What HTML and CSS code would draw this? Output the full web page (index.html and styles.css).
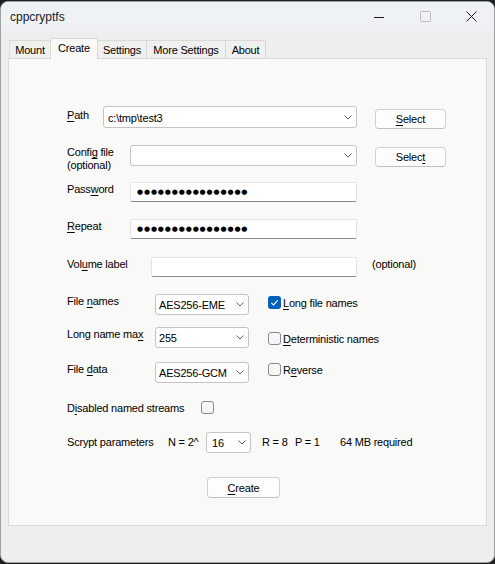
FILE: index.html
```html
<!DOCTYPE html>
<html>
<head>
<meta charset="utf-8">
<title>cppcryptfs</title>
<link rel="stylesheet" href="styles.css">
</head>
<body>
<div class="window">
  <div class="titlebar">
    <div class="title">cppcryptfs</div>
    <div class="caption">
      <div class="cbtn"><svg width="10" height="10" viewBox="0 0 10 10"><path d="M0 5.5H10" stroke="#1b1b1b" stroke-width="1"/></svg></div>
      <div class="cbtn"><svg width="11" height="11" viewBox="0 0 11 11"><rect x="0.5" y="0.5" width="10" height="10" rx="1" fill="none" stroke="#bdbdbd"/></svg></div>
      <div class="cbtn"><svg width="11" height="11" viewBox="0 0 11 11"><path d="M0.5 0.5L10.5 10.5M10.5 0.5L0.5 10.5" stroke="#1b1b1b" stroke-width="1"/></svg></div>
    </div>
  </div>
  <div class="client">
    <div class="tabs">
      <div class="tab t-mount">Mount</div>
      <div class="tab sel t-create">Create</div>
      <div class="tab t-settings">Settings</div>
      <div class="tab t-more">More Settings</div>
      <div class="tab t-about">About</div>
    </div>
    <div class="panel">
      <div class="row r-path">
        <div class="lbl l-path"><u>P</u>ath</div>
        <div class="combo c-path"><span>c:\tmp\test3</span><svg class="arr" width="8" height="5" viewBox="0 0 8 5"><path d="M0.5 0.5L4 4L7.5 0.5" fill="none" stroke="#5f5f5f"/></svg></div>
        <div class="btn b-sel1"><u>S</u>elect</div>
      </div>
      <div class="row r-config">
        <div class="lbl l-config">Confi<u>g</u> file<br>(optional)</div>
        <div class="combo c-config"><span></span><svg class="arr" width="8" height="5" viewBox="0 0 8 5"><path d="M0.5 0.5L4 4L7.5 0.5" fill="none" stroke="#5f5f5f"/></svg></div>
        <div class="btn b-sel2">Selec<u>t</u></div>
      </div>
      <div class="row r-pass">
        <div class="lbl l-mid">Pass<u>w</u>ord</div>
        <div class="edit e-pass"><span class="pw">●●●●●●●●●●●●●●●●</span></div>
      </div>
      <div class="row r-repeat">
        <div class="lbl l-mid"><u>R</u>epeat</div>
        <div class="edit e-pass"><span class="pw">●●●●●●●●●●●●●●●●</span></div>
      </div>
      <div class="row r-volume">
        <div class="lbl l-vol">Vol<u>u</u>me label</div>
        <div class="edit e-vol"></div>
        <div class="lbl opt">(optional)</div>
      </div>
      <div class="row r-names">
        <div class="lbl l-wide">File <u>n</u>ames</div>
        <div class="combo c-small"><span>AES256-EME</span><svg class="arr" width="8" height="5" viewBox="0 0 8 5"><path d="M0.5 0.5L4 4L7.5 0.5" fill="none" stroke="#5f5f5f"/></svg></div>
        <div class="check k-names">
          <svg class="box" width="13" height="13" viewBox="0 0 13 13"><rect x="0" y="0" width="13" height="13" rx="3" fill="#005fb8"/><path d="M3.3 6.8L5.5 8.9L9.8 4.3" fill="none" stroke="#fff" stroke-width="1.1"/></svg>
          <span><u>L</u>ong file names</span>
        </div>
      </div>
      <div class="row r-longmax">
        <div class="lbl l-wide">Long name ma<u>x</u></div>
        <div class="combo c-small"><span>255</span><svg class="arr" width="8" height="5" viewBox="0 0 8 5"><path d="M0.5 0.5L4 4L7.5 0.5" fill="none" stroke="#5f5f5f"/></svg></div>
        <div class="check k-det">
          <svg class="box" width="13" height="13" viewBox="0 0 13 13"><rect x="0.5" y="0.5" width="12" height="12" rx="2.5" fill="#f6f6f6" stroke="#8a8a8a"/></svg>
          <span><u>D</u>eterministic names</span>
        </div>
      </div>
      <div class="row r-data">
        <div class="lbl l-wide">File <u>d</u>ata</div>
        <div class="combo c-small"><span>AES256-GCM</span><svg class="arr" width="8" height="5" viewBox="0 0 8 5"><path d="M0.5 0.5L4 4L7.5 0.5" fill="none" stroke="#5f5f5f"/></svg></div>
        <div class="check k-rev">
          <svg class="box" width="13" height="13" viewBox="0 0 13 13"><rect x="0.5" y="0.5" width="12" height="12" rx="2.5" fill="#f6f6f6" stroke="#8a8a8a"/></svg>
          <span>R<u>e</u>verse</span>
        </div>
      </div>
      <div class="row r-streams">
        <div class="lbl l-streams">D<u>i</u>sabled named streams</div>
        <svg class="box" width="13" height="13" viewBox="0 0 13 13"><rect x="0.5" y="0.5" width="12" height="12" rx="2.5" fill="#f6f6f6" stroke="#8a8a8a"/></svg>
      </div>
      <div class="row r-scrypt">
        <div class="lbl l-scrypt">Scrypt parameters</div>
        <div class="lbl l-n">N = 2^</div>
        <div class="combo c-n"><span>16</span><svg class="arr" width="8" height="5" viewBox="0 0 8 5"><path d="M0.5 0.5L4 4L7.5 0.5" fill="none" stroke="#5f5f5f"/></svg></div>
        <div class="lbl l-r">R = 8</div>
        <div class="lbl l-p">P = 1</div>
        <div class="lbl l-mb">64 MB required</div>
      </div>
      <div class="row r-create">
        <div class="btn b-create"><u>C</u>reate</div>
      </div>
    </div>
  </div>
</div>
</body>
</html>
```

FILE: styles.css
```css
* { box-sizing: border-box; }
html, body { margin: 0; padding: 0; }
body {
  background: #1f1f1f;
  width: 495px;
  height: 564px;
  overflow: hidden;
  font-family: "Liberation Sans", Arial, sans-serif;
  font-size: 11px;
  letter-spacing: -0.2px;
  color: #000;
}
u { text-decoration-thickness: 1px; text-underline-offset: 1.5px; }

.window {
  margin-top: 1px;
  width: 495px;
  height: 562px;
  border: 1px solid #a0a0a0;
  border-radius: 8px;
  overflow: hidden;
  background: #eeefec;
  display: flex;
  flex-direction: column;
}
.titlebar {
  height: 29px;
  flex: none;
  background: #eef2f5;
  display: flex;
  align-items: center;
}
.title { flex: 1; padding-left: 9px; font-size: 12px; letter-spacing: 0; color: #1a1a1a; }
.caption { display: flex; height: 29px; }
.cbtn { width: 46px; display: flex; align-items: center; justify-content: center; }

.client { flex: 1; padding: 7px 7px 0 7px; }
.tabs {
  display: flex;
  align-items: flex-end;
  height: 20px;
  padding-left: 1px;
  position: relative;
  z-index: 1;
}
.tab {
  height: 18px;
  border: 1px solid #d9d9d9;
  border-bottom: none;
  background: #f0f0ee;
  text-align: center;
  line-height: 14px;
  padding-top: 2px;
  margin-right: -1px;
  white-space: nowrap;
}
.tab.sel {
  height: 21px;
  margin-bottom: -1px;
  background: #f9f9f7;
  position: relative;
  z-index: 2;
  padding-top: 2px;
}
.t-mount { width: 42px; }
.t-create { width: 48px; }
.t-settings { width: 50px; }
.t-more { width: 80px; }
.t-about { width: 41px; }

.panel {
  height: 468px;
  border: 1px solid #dadada;
  background: #f9f9f7;
  padding-left: 58px;
  display: flex;
  flex-direction: column;
}

.row { display: flex; align-items: flex-start; flex: none; }
.lbl { line-height: 14px; white-space: nowrap; flex: none; }

.r-path { margin-top: 47px; height: 22px; }
.r-config { margin-top: 17px; height: 21px; }
.r-pass { margin-top: 16px; height: 20px; }
.r-repeat { margin-top: 17px; height: 20px; }
.r-volume { margin-top: 18px; height: 20px; }
.r-names { margin-top: 17px; height: 21px; }
.r-longmax { margin-top: 12px; height: 21px; }
.r-data { margin-top: 14px; height: 21px; }
.r-streams { margin-top: 18px; height: 13px; }
.r-scrypt { margin-top: 18px; height: 21px; }
.r-create { margin-top: 24px; height: 21px; }

.l-path { width: 36px; padding-top: 2px; }
.l-config { width: 63px; line-height: 13px; padding-top: 1px; }
.l-mid { width: 63px; }
.l-vol { width: 84px; }
.l-wide { width: 88px; }
.l-streams { width: 134px; }
.l-scrypt { width: 101px; padding-top: 3px; }
.l-n { width: 38px; padding-top: 3px; }
.l-r { margin-left: 11px; width: 33px; padding-top: 3px; }
.l-p { width: 45px; padding-top: 3px; }
.l-mb { padding-top: 3px; }
.opt { margin-left: 15px; }

.combo {
  flex: none;
  height: 100%;
  background: #ffffff;
  border: 1px solid #c4c4c4;
  border-radius: 3px;
  display: flex;
  align-items: center;
  justify-content: space-between;
  padding: 0 4px 0 4px;
  white-space: nowrap;
}
.combo span { padding-top: 1px; }
.arr { flex: none; }
.c-path { width: 254px; }
.c-config { width: 227px; }
.c-small { width: 94px; padding-left: 3px; }
.c-n { width: 45px; padding-left: 5px; }

.edit {
  flex: none;
  height: 100%;
  background: #ffffff;
  border: 1px solid #e4e4e4;
  border-bottom-color: #8a8a8a;
  border-radius: 2px;
  display: flex;
  align-items: center;
  padding-left: 6px;
}
.e-pass { width: 227px; }
.e-vol { width: 206px; }
.pw {
  font-family: "DejaVu Sans", sans-serif;
  font-size: 7px;
  letter-spacing: 0.85px;
  color: #000;
  line-height: 8px;
}

.btn {
  flex: none;
  height: 20px;
  background: #fdfdfd;
  border: 1px solid #d2d2d2;
  border-bottom-color: #c0c0c0;
  border-radius: 4px;
  display: flex;
  align-items: center;
  justify-content: center;
}
.b-sel1 { width: 71px; margin-left: 18px; margin-top: 3px; }
.b-sel2 { width: 71px; margin-left: 18px; margin-top: 2px; }
.b-create { width: 73px; height: 21px; margin-left: 140px; }

.check { display: flex; align-items: center; height: 15px; margin-left: 19px; white-space: nowrap; }
.check .box { margin-right: 2px; flex: none; }
.k-names { margin-top: 1px; }
.k-det { margin-top: 4px; }
.k-rev { margin-top: 0px; }
.box { flex: none; }
```
